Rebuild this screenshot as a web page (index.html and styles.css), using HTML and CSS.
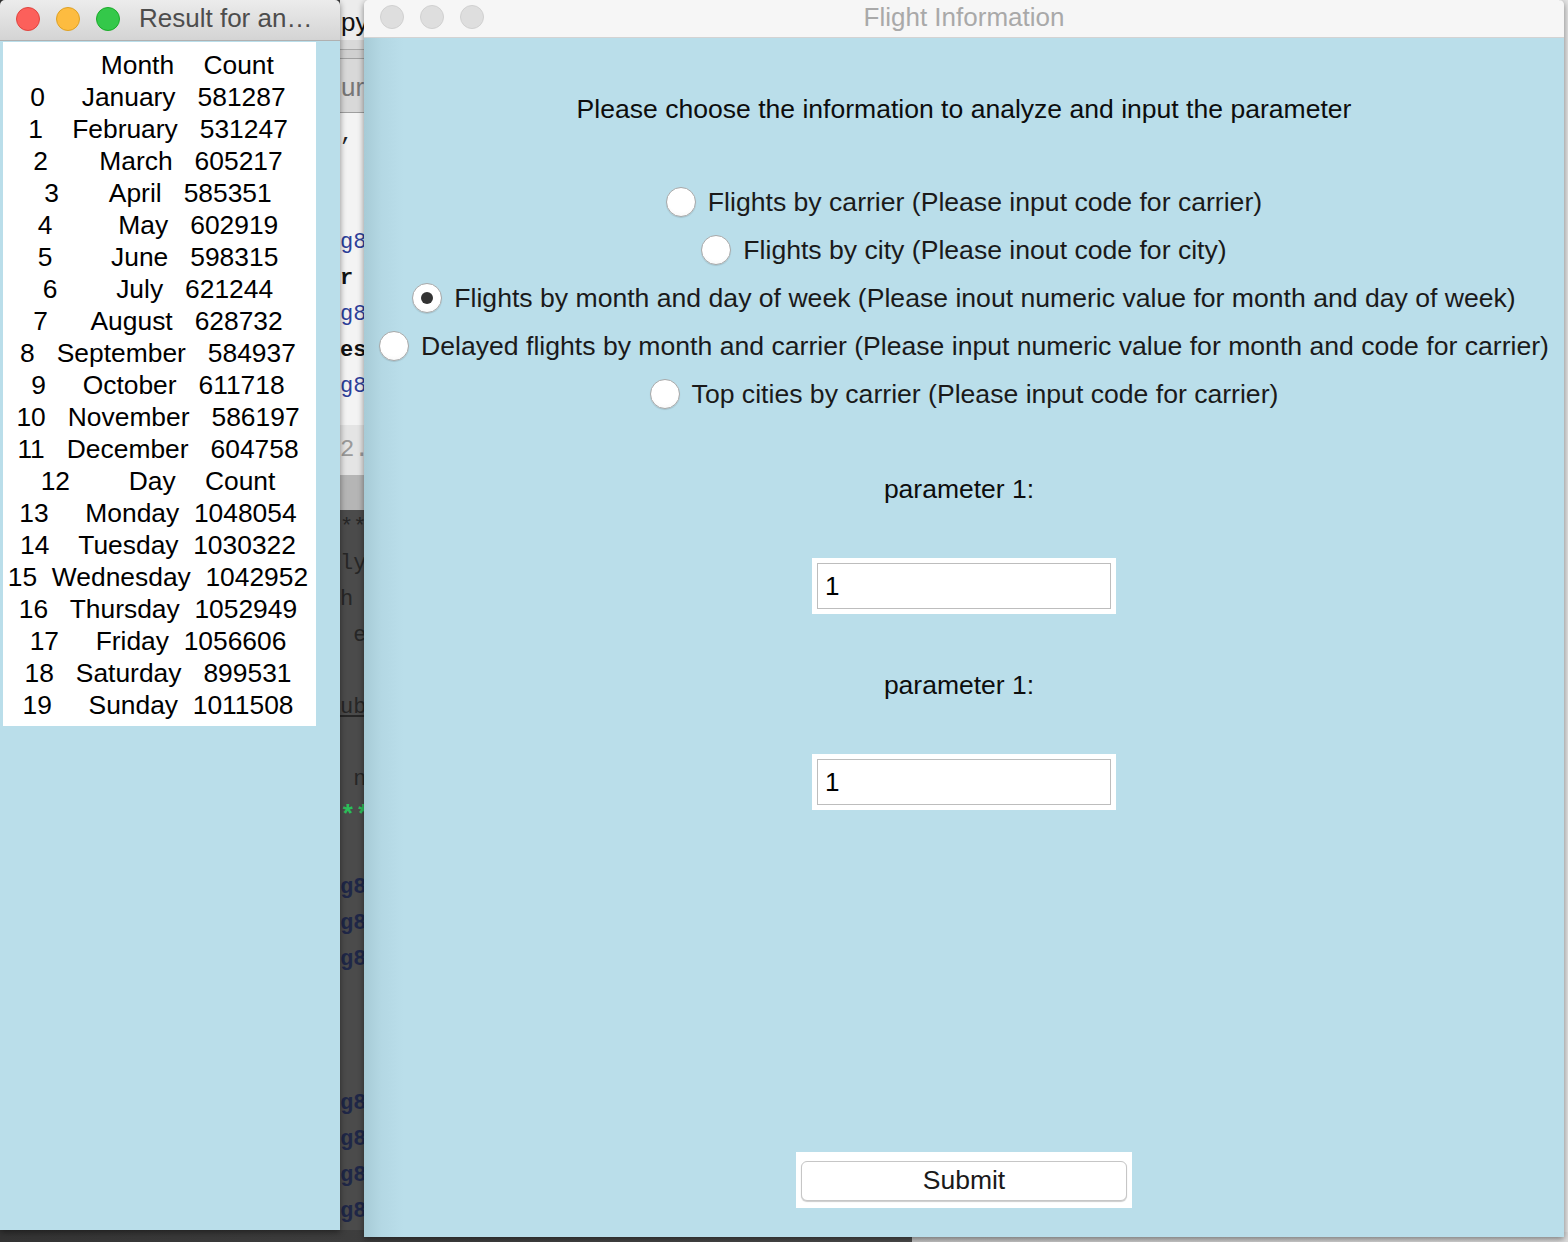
FILE: index.html
```html
<!DOCTYPE html>
<html>
<head>
<meta charset="utf-8">
<title>Flight Information</title>
<link rel="stylesheet" href="styles.css">
</head>
<body>
<div class="desktop">
  <div class="editor">
    <div class="ed-tab">py</div>
    <div class="ed-bar1"></div>
    <div class="ed-bar2"></div>
    <div class="ed-bar3">ur</div>
    <div class="ed-light">
      <div class="code-line">,</div>
      <div class="code-line"></div>
      <div class="code-line"></div>
      <div class="code-line blue">g8</div>
      <div class="code-line bold">r</div>
      <div class="code-line blue">g8</div>
      <div class="code-line bold">es</div>
      <div class="code-line blue">g8</div>
    </div>
    <div class="ed-gutter">2.</div>
    <div class="ed-gray"></div>
    <div class="ed-dark">
      <div class="code-line dk">**</div>
      <div class="code-line dk">ly</div>
      <div class="code-line dk">h</div>
      <div class="code-line dk"> e</div>
      <div class="code-line dk"></div>
      <div class="code-line dk under">ub</div>
      <div class="code-line dk"></div>
      <div class="code-line dk"> n</div>
      <div class="code-line green">**</div>
      <div class="code-line dk"></div>
      <div class="code-line navy">g8</div>
      <div class="code-line navy">g8</div>
      <div class="code-line navy">g8</div>
      <div class="code-line dk"></div>
      <div class="code-line dk"></div>
      <div class="code-line dk"></div>
      <div class="code-line navy">g8</div>
      <div class="code-line navy">g8</div>
      <div class="code-line navy">g8</div>
      <div class="code-line navy">g8</div>
    </div>
  </div>

  <div class="edge-window"></div>
  <div class="bottom-window"></div>

  <div class="win win-result">
    <div class="titlebar titlebar-active">
      <span class="light red"></span>
      <span class="light yellow"></span>
      <span class="light green-l"></span>
      <span class="title-left">Result for an…</span>
    </div>
    <div class="win-body">
      <pre class="result">        Month    Count
0     January   581287
1    February   531247
2       March   605217
3       April   585351
4         May   602919
5        June   598315
6        July   621244
7      August   628732
8   September   584937
9     October   611718
10   November   586197
11   December   604758
12        Day    Count
13     Monday  1048054
14    Tuesday  1030322
15  Wednesday  1042952
16   Thursday  1052949
17     Friday  1056606
18   Saturday   899531
19     Sunday  1011508</pre>
    </div>
  </div>

  <div class="win win-flight">
    <div class="titlebar titlebar-inactive">
      <div class="lights">
        <span class="light off"></span>
        <span class="light off"></span>
        <span class="light off"></span>
      </div>
      <span class="title-center">Flight Information</span>
    </div>
    <div class="win-body flight-body">
      <div class="heading">Please choose the information to analyze and input the parameter</div>
      <div class="radios">
        <div class="radio-row"><span class="radio"></span><span class="radio-label">Flights by carrier (Please input code for carrier)</span></div>
        <div class="radio-row"><span class="radio"></span><span class="radio-label">Flights by city (Please inout code for city)</span></div>
        <div class="radio-row"><span class="radio checked"></span><span class="radio-label">Flights by month and day of week (Please inout numeric value for month and day of week)</span></div>
        <div class="radio-row"><span class="radio"></span><span class="radio-label">Delayed flights by month and carrier (Please input numeric value for month and code for carrier)</span></div>
        <div class="radio-row"><span class="radio"></span><span class="radio-label">Top cities by carrier (Please input code for carrier)</span></div>
      </div>
      <div class="param-label">parameter 1:</div>
      <div class="entry-frame"><div class="entry">1</div></div>
      <div class="param-label">parameter 1:</div>
      <div class="entry-frame"><div class="entry">1</div></div>
      <div class="submit-frame"><div class="submit">Submit</div></div>
    </div>
  </div>
</div>
</body>
</html>
```

FILE: styles.css
```css
* { box-sizing: border-box; }
html, body { margin: 0; padding: 0; }
body {
  width: 1568px;
  height: 1242px;
  overflow: hidden;
  font-family: "Liberation Sans", Arial, Helvetica, sans-serif;
}
.desktop {
  position: relative;
  width: 1568px;
  height: 1242px;
  background: linear-gradient(to right, #333333, #4e4e4e 60%, #444444);
  overflow: hidden;
}

/* background editor window sliver */
.editor {
  position: absolute;
  left: 340px;
  top: 0;
  width: 40px;
  height: 1230px;
  display: flex;
  flex-direction: column;
  background: #4b4b4b;
  overflow: hidden;
}
.ed-tab {
  height: 40px;
  background: #ececec;
  font-size: 26px;
  line-height: 44px;
  color: #111;
  padding-left: 1px;
  white-space: pre;
}
.ed-bar1 { height: 10px; background: #d9d9d9; border-bottom: 1px solid #a8a8a8; }
.ed-bar2 { height: 9px; background: #d0d0d0; border-bottom: 1px solid #a0a0a0; }
.ed-bar3 {
  height: 54px;
  background: #d8d8d8;
  border-bottom: 1px solid #9e9e9e;
  font-size: 26px;
  line-height: 56px;
  color: #777;
  padding-left: 1px;
}
.ed-light {
  height: 318px;
  background: #f3f3f3;
  padding-top: 4px;
}
.code-line {
  height: 36px;
  font-family: "Liberation Mono", "DejaVu Sans Mono", monospace;
  font-size: 22px;
  line-height: 36px;
  white-space: pre;
  color: #222;
}
.code-line.blue { color: #2d3f9a; }
.code-line.bold { font-weight: bold; color: #111; }
.code-line.dk { color: #262626; }
.code-line.under { text-decoration: underline; }
.code-line.green { color: #2bbf5a; font-weight: bold; font-size: 26px; }
.code-line.navy { color: #1f2747; font-weight: bold; }
.ed-gutter {
  height: 50px;
  background: #e4e4e4;
  font-family: "Liberation Mono", monospace;
  font-size: 24px;
  line-height: 50px;
  color: #9a9a9a;
}
.ed-gray { height: 36px; background: #b5b5b5; }
.ed-dark { flex: 1; background: #4b4b4b; }

.edge-window {
  position: absolute;
  left: 1560px;
  top: 0;
  width: 8px;
  height: 1242px;
  background: #e4e4e4;
  border-left: 1px solid #b5b5b5;
}
.bottom-window {
  position: absolute;
  left: 912px;
  top: 1232px;
  width: 656px;
  height: 10px;
  background: linear-gradient(to right, #c6c6c6, #dcdcdc);
}

/* windows */
.win {
  position: absolute;
  display: flex;
  flex-direction: column;
  border-radius: 5px 5px 0 0;
  overflow: hidden;
  box-shadow: 0 2px 6px rgba(0,0,0,0.45);
}
.win-result { left: 0; top: 0; width: 340px; height: 1230px; }
.win-flight { left: 364px; top: 0; width: 1200px; height: 1237px; }

.titlebar {
  position: relative;
  display: flex;
  align-items: center;
  flex: none;
}
.titlebar-active {
  height: 41px;
  background: linear-gradient(#ececec, #d4d4d4);
  border-bottom: 1px solid #b0b0b0;
  padding-left: 16px;
  gap: 16px;
}
.titlebar-inactive {
  height: 38px;
  background: #f6f6f6;
  border-bottom: 1px solid #d3d3d3;
  padding-left: 16px;
}
.lights { display: flex; gap: 16px; margin-top: -4px; }
.light {
  width: 24px;
  height: 24px;
  border-radius: 50%;
  flex: none;
  margin-top: -3px;
}
.red { background: #fc605b; border: 1px solid #e0443e; }
.yellow { background: #fdbc40; border: 1px solid #dea123; }
.green-l { background: #34c84a; border: 1px solid #1aab29; }
.off { background: #dedede; border: 1px solid #d0d0d0; margin-top: 0; }
.title-left {
  font-size: 26px;
  color: #4d4d4d;
  margin-left: 3px;
  margin-top: -3px;
  white-space: nowrap;
}
.title-center {
  position: absolute;
  left: 0;
  right: 0;
  top: 0;
  text-align: center;
  font-size: 26px;
  line-height: 34px;
  color: #a9a9a9;
  pointer-events: none;
}

.win-body {
  flex: 1;
  background: #badeea;
}
.result {
  margin: 1px 0 0 3px;
  width: 313px;
  background: #ffffff;
  padding: 7px 3px 5px 0;
  font-family: "Liberation Sans", Arial, Helvetica, sans-serif;
  font-size: 26.4px;
  line-height: 32px;
  color: #000;
  text-align: center;
  white-space: pre;
}

.flight-body {
  display: flex;
  flex-direction: column;
  align-items: center;
  background: linear-gradient(to right, #a7cbd6 0, #b4d8e4 18px, #badeea 40px, #badeea 100%);
  color: #111;
}
.heading {
  margin-top: 55px;
  font-size: 26.55px;
  line-height: 32px;
  color: #0d0d0d;
}
.radios {
  margin-top: 53px;
  display: flex;
  flex-direction: column;
  align-items: center;
}
.radio-row {
  height: 48px;
  display: flex;
  align-items: center;
  gap: 12px;
}
.radio {
  width: 30px;
  height: 30px;
  border-radius: 50%;
  background: radial-gradient(circle at 50% 35%, #ffffff 60%, #f3f3f3);
  border: 1px solid #a9a9a9;
  box-shadow: 0 1px 1px rgba(0,0,0,0.12);
  display: flex;
  align-items: center;
  justify-content: center;
  flex: none;
}
.radio.checked::after {
  content: "";
  width: 12px;
  height: 12px;
  border-radius: 50%;
  background: #333333;
}
.radio-label {
  font-size: 26.6px;
  line-height: 32px;
  color: #1a1a1a;
  white-space: nowrap;
}
.param-label {
  margin-top: 55px;
  font-size: 26.5px;
  line-height: 32px;
  color: #0d0d0d;
  padding-right: 10px;
}
.entry-frame {
  margin-top: 53px;
  width: 304px;
  height: 56px;
  background: #ffffff;
  padding: 5px;
}
.entry {
  height: 46px;
  border: 1px solid #bdbdbd;
  background: #ffffff;
  font-size: 26px;
  line-height: 44px;
  padding-left: 7px;
  color: #000;
}
.submit-frame {
  margin-top: 342px;
  width: 336px;
  height: 56px;
  background: #ffffff;
  padding: 9px 5px 7px 5px;
}
.submit {
  height: 40px;
  border: 1px solid #c6c6c6;
  border-radius: 6px;
  background: #ffffff;
  box-shadow: 0 1px 1px rgba(0,0,0,0.2);
  text-align: center;
  font-size: 26.5px;
  line-height: 37px;
  color: #1a1a1a;
}
```
